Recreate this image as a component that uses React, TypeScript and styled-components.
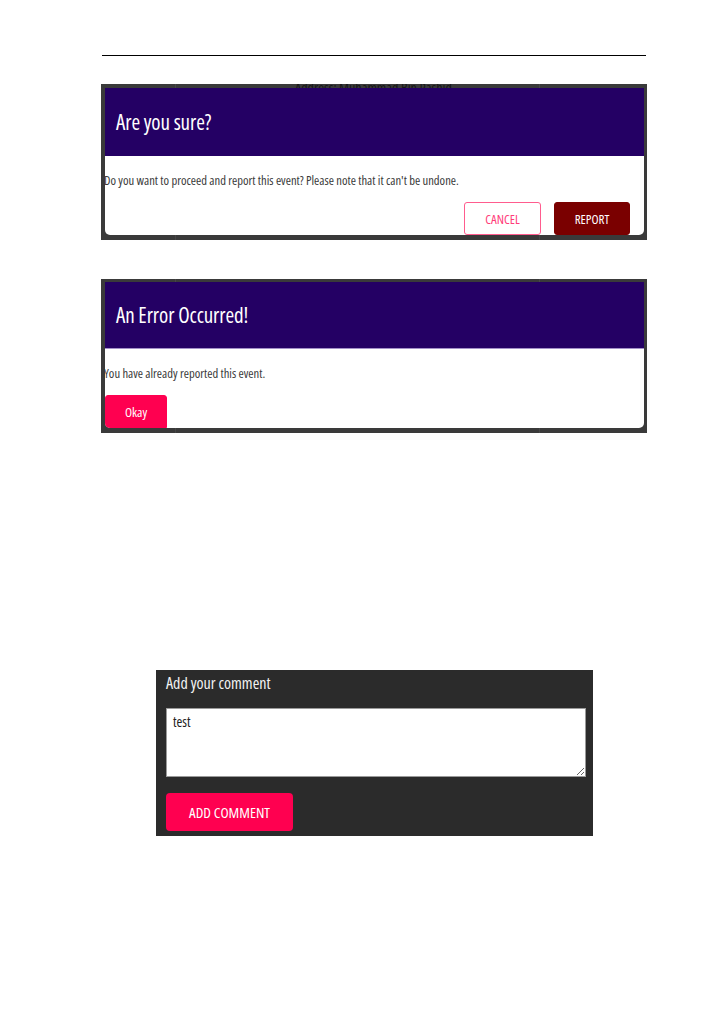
import styled, { createGlobalStyle } from 'styled-components';

const GlobalStyle = createGlobalStyle`
  html, body {
    margin: 0;
    padding: 0;
    background: #ffffff;
  }
  body {
    font-family: 'Open Sans', 'Liberation Sans', sans-serif;
    font-stretch: 75%;
  }
`;

const Page = styled.div`
  width: 714px;
  min-height: 1010px;
  padding-top: 55px;
  box-sizing: border-box;
  display: flex;
  flex-direction: column;
  align-items: flex-start;
`;

const Rule = styled.hr`
  width: 544px;
  margin: 0 0 28px 102px;
  border: none;
  border-top: 1px solid #000;
`;

const Frame = styled.div<{ $top: number; $gapAfter: number }>`
  position: relative;
  width: 546px;
  margin-left: 101px;
  margin-bottom: ${({ $gapAfter }) => $gapAfter}px;
  box-sizing: border-box;
  padding: ${({ $top }) => $top}px 3px 5px 4px;
  background:
    linear-gradient(to right, transparent 74px, #474747 74px, #474747 75px, transparent 75px, transparent 438px, #474747 438px, #474747 439px, transparent 439px),
    #3a3a3a;
  overflow: hidden;
`;

const BehindText = styled.span`
  position: absolute;
  top: -6px;
  left: 194px;
  font-size: 14px;
  color: #161616;
  white-space: nowrap;
`;

const Modal = styled.div`
  position: relative;
  background: #ffffff;
  border-radius: 0 0 5px 5px;
  overflow: hidden;
`;

const Header = styled.div<{ $height: number; $line?: boolean }>`
  height: ${({ $height }) => $height}px;
  background: #240064;
  display: flex;
  align-items: center;
  padding-left: 11px;
  border-bottom: ${({ $line }) => ($line ? '1px solid #a390c8' : 'none')};
`;

const Title = styled.h2`
  margin: 0;
  color: #ffffff;
  font-size: 21px;
  font-weight: 500;
  letter-spacing: -0.1px;
`;

const Message = styled.p<{ $top: number }>`
  margin: ${({ $top }) => $top}px 0 0 -1px;
  font-size: 12.6px;
  font-weight: 400;
  line-height: 15px;
  color: #3a3a3a;
  white-space: nowrap;
`;

const Actions = styled.div<{ $align: 'end' | 'start' }>`
  display: flex;
  justify-content: ${({ $align }) => ($align === 'end' ? 'flex-end' : 'flex-start')};
  gap: 13px;
  padding: 0 ${({ $align }) => ($align === 'end' ? '14px' : '0')};
  margin-top: 14px;
`;

const Button = styled.button<{ $variant: 'outline' | 'danger' | 'primary'; $w: number; $h: number }>`
  width: ${({ $w }) => $w}px;
  height: ${({ $h }) => $h}px;
  border-radius: 3px;
  font-family: inherit;
  font-stretch: 75%;
  font-size: 13px;
  font-weight: 400;
  cursor: pointer;
  text-transform: uppercase;
  border: 1px solid
    ${({ $variant }) => ($variant === 'outline' ? '#ff5c8e' : $variant === 'danger' ? '#7a0000' : '#ff0050')};
  background: ${({ $variant }) => ($variant === 'outline' ? '#ffffff' : $variant === 'danger' ? '#7a0000' : '#ff0050')};
  color: ${({ $variant }) => ($variant === 'outline' ? '#ff3d7a' : '#ffffff')};
`;

const OkayButton = styled(Button)`
  text-transform: none;
  font-size: 13px;
  border-radius: 3px 3px 0 3px;
`;

const CommentBox = styled.div`
  width: 437px;
  margin-left: 156px;
  box-sizing: border-box;
  background: #2b2b2b;
  padding: 3px 7px 5px 10px;
  display: flex;
  flex-direction: column;
  align-items: flex-start;
`;

const CommentLabel = styled.label`
  color: #f2f2f2;
  font-size: 16px;
  font-weight: 400;
  line-height: 20px;
`;

const CommentInput = styled.textarea`
  margin-top: 15px;
  width: 420px;
  height: 69px;
  box-sizing: border-box;
  border: 1px solid #9a9a9a;
  padding: 3px 6px;
  font-family: inherit;
  font-stretch: 75%;
  font-size: 14px;
  color: #222;
  resize: vertical;
  outline: none;
`;

const AddButton = styled.button`
  margin-top: 16px;
  width: 127px;
  height: 38px;
  border: none;
  border-radius: 4px;
  background: #ff0050;
  color: #ffffff;
  font-family: inherit;
  font-stretch: 75%;
  font-size: 15px;
  text-transform: uppercase;
`;

const App = () => {
  return (
    <Page>
      <GlobalStyle />
      <Rule />

      <Frame $top={4} $gapAfter={39}>
        <BehindText>Address: Muhammad Bin Rashid</BehindText>
        <Modal>
          <Header $height={68}>
            <Title>Are you sure?</Title>
          </Header>
          <Message $top={17}>
            Do you want to proceed and report this event? Please note that it can't be undone.
          </Message>
          <Actions $align="end">
            <Button $variant="outline" $w={77} $h={33}>
              Cancel
            </Button>
            <Button $variant="danger" $w={76} $h={33}>
              Report
            </Button>
          </Actions>
        </Modal>
      </Frame>

      <Frame $top={3} $gapAfter={237}>
        <Modal>
          <Header $height={66} $line>
            <Title>An Error Occurred!</Title>
          </Header>
          <Message $top={17}>You have already reported this event.</Message>
          <Actions $align="start">
            <OkayButton $variant="primary" $w={62} $h={33}>
              Okay
            </OkayButton>
          </Actions>
        </Modal>
      </Frame>

      <CommentBox>
        <CommentLabel htmlFor="comment">Add your comment</CommentLabel>
        <CommentInput id="comment" defaultValue="test" />
        <AddButton>Add Comment</AddButton>
      </CommentBox>
    </Page>
  );
};

export default App;
